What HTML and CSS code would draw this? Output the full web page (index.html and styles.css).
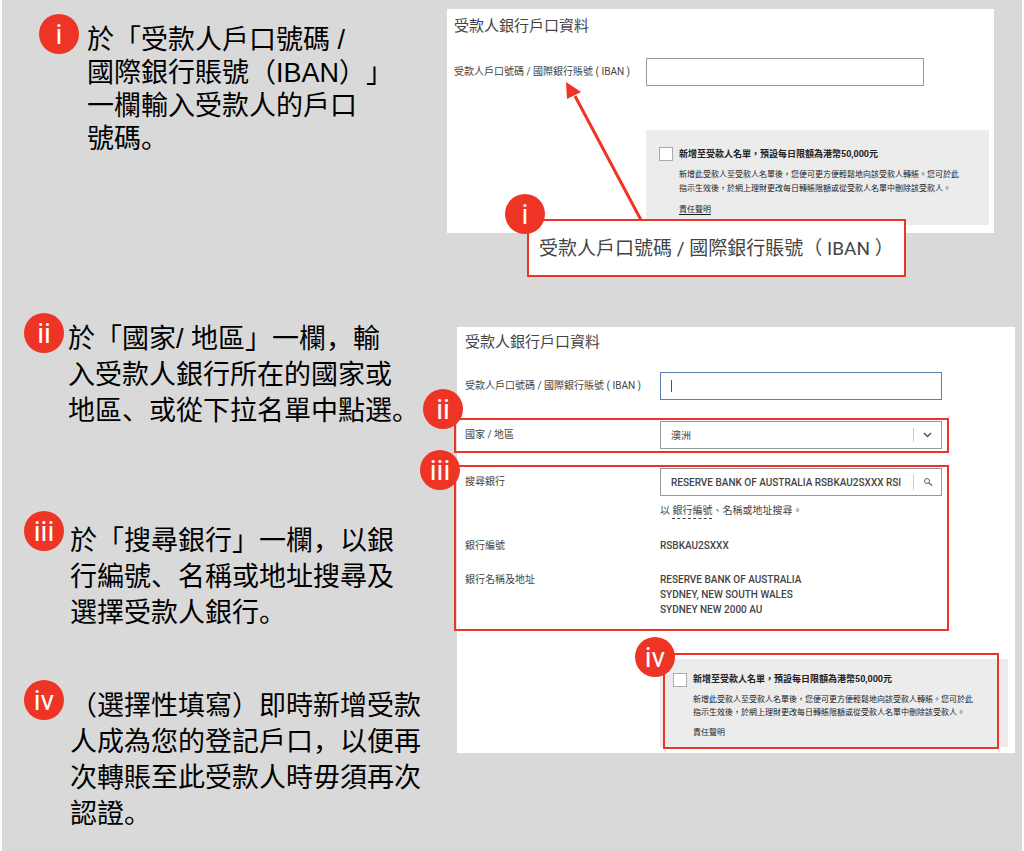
FILE: index.html
```html
<!DOCTYPE html>
<html lang="zh">
<head>
  <meta charset="UTF-8" />
  <meta name="viewport" content="width=device-width, initial-scale=1" />
  <title>受款人銀行戶口資料</title>
  <link rel="stylesheet" href="styles.css">
</head>
<body>
<main class="guide">

  <section class="part part-account">
    <div class="steps">
      <div class="step">
        <span class="badge">i</span>
        <p>於「受款人戶口號碼 /<br>國際銀行賬號（IBAN）」<br>一欄輸入受款人的戶口<br>號碼。</p>
      </div>
    </div>

    <form class="panel" lang="zh-Hant">
      <h2>受款人銀行戶口資料</h2>
      <div class="row">
        <label for="iban-1">受款人戶口號碼 / 國際銀行賬號 ( IBAN )</label>
        <input class="field" id="iban-1" type="text">
      </div>
      <div class="note">
        <input type="checkbox" id="save-1">
        <div class="note-text">
          <label for="save-1">新增至受款人名單，預設每日限額為港幣50,000元</label>
          <p>新增此受款人至受款人名單後，您便可更方便輕鬆地向該受款人轉賬。您可於此<br>指示生效後，於網上理財更改每日轉賬限額或從受款人名單中刪除該受款人。</p>
          <a class="underlined" href="#">責任聲明</a>
        </div>
      </div>

      <svg class="arrow" width="90" height="144" viewBox="0 0 90 144">
        <path d="M82 140 L16 16" stroke="#ee3424" stroke-width="3" fill="none"/>
        <path d="M7 2 L22 12 L8 19 Z" fill="#ee3424"/>
      </svg>
      <div class="callout">
        <span class="badge">i</span>
        受款人戶口號碼 / 國際銀行賬號（ IBAN ）
      </div>
    </form>
  </section>

  <section class="part part-bank">
    <div class="steps">
      <div class="step">
        <span class="badge">ii</span>
        <p>於「國家/ 地區」一欄，輸<br>入受款人銀行所在的國家或<br>地區、或從下拉名單中點選。</p>
      </div>
      <div class="step step-search">
        <span class="badge">iii</span>
        <p>於「搜尋銀行」一欄，以銀<br>行編號、名稱或地址搜尋及<br>選擇受款人銀行。</p>
      </div>
      <div class="step step-optional">
        <span class="badge">iv</span>
        <p>（選擇性填寫）即時新增受款<br>人成為您的登記戶口，以便再<br>次轉賬至此受款人時毋須再次<br>認證。</p>
      </div>
    </div>

    <form class="panel" lang="zh-Hant">
      <h2>受款人銀行戶口資料</h2>
      <div class="row">
        <label for="iban-2">受款人戶口號碼 / 國際銀行賬號 ( IBAN )</label>
        <div class="control">
          <input class="field focused" id="iban-2" type="text">
          <span class="caret"></span>
        </div>
      </div>

      <div class="marked marked-country">
        <span class="badge">ii</span>
        <div class="row">
          <label for="country">國家 / 地區</label>
          <div class="control">
            <select class="field" id="country"><option>澳洲</option></select>
            <svg class="chevron" width="28" height="16" viewBox="0 0 28 16">
              <path d="M.5 1V15" stroke="#ccc"/>
              <path d="M11 6l3.500 3.500L18 6" fill="none" stroke="#555" stroke-width="1.500"/>
            </svg>
          </div>
        </div>
      </div>

      <div class="marked marked-search">
        <span class="badge">iii</span>
        <div class="row">
          <label for="bank">搜尋銀行</label>
          <div>
            <div class="search">
              <input id="bank" type="text" value="RESERVE BANK OF AUSTRALIA RSBKAU2SXXX RSI">
              <button type="button" aria-label="搜尋">
                <svg width="10" height="10" viewBox="0 0 10 10">
                  <circle cx="4" cy="4" r="2.500" fill="none" stroke="#666"/>
                  <path d="M6 6l3 2.500" stroke="#666" stroke-width="1.500"/>
                </svg>
              </button>
            </div>
            <p class="hint">以 <a href="#">銀行編號</a>、名稱或地址搜尋。</p>
          </div>
        </div>
        <div class="row detail">
          <span>銀行編號</span>
          <span class="value">RSBKAU2SXXX</span>
        </div>
        <div class="row detail">
          <span>銀行名稱及地址</span>
          <span class="value">RESERVE BANK OF AUSTRALIA<br>SYDNEY, NEW SOUTH WALES<br>SYDNEY NEW 2000 AU</span>
        </div>
      </div>

      <div class="note">
        <input type="checkbox" id="save-2">
        <div class="note-text">
          <label for="save-2">新增至受款人名單，預設每日限額為港幣50,000元</label>
          <p>新增此受款人至受款人名單後，您便可更方便輕鬆地向該受款人轉賬。您可於此<br>指示生效後，於網上理財更改每日轉賬限額或從受款人名單中刪除該受款人。</p>
          <a href="#">責任聲明</a>
        </div>
        <div class="outline"><span class="badge">iv</span></div>
      </div>
    </form>
  </section>

</main>
</body>
</html>
```
FILE: styles.css
```css
* { box-sizing: border-box; }
body {
  margin: 0;
  background: #fff;
  color: #000;
  font-family: "Liberation Sans", "Noto Sans CJK SC", sans-serif;
}
h2, p { margin: 0; }

.guide {
  margin: 0 2px;
  min-height: 100vh;
  background: #d9d9d9;
}
.part { display: grid; align-items: start; }
.part-account {
  grid-template-columns: 445fr 575fr;
  padding-top: 9px;
}
.part-bank {
  grid-template-columns: 455fr 565fr;
  margin-top: 80px;
}

/* numbered instructions */
.step {
  display: flex;
  gap: 4px;
  padding-left: 22px;
  font-size: 27px;
  line-height: 36px;
  white-space: nowrap;
  text-spacing-trim: space-all;
}
.step p { padding-top: 8px; }
.part-account .step {
  gap: 8px;
  padding: 5px 0 0 37px;
  line-height: 33px;
}
.part-account .step p { padding-top: 10px; }
.step-search { margin-top: 82px; gap: 6px; }
.step-search p { padding-top: 12px; }
.step-optional { margin-top: 49px; gap: 6px; }

.badge {
  flex: none;
  width: 40px;
  height: 40px;
  border-radius: 50%;
  background: #ee3424;
  color: #fff;
  font-family: Roboto, sans-serif;
  font-size: 28px;
  line-height: 42px;
  text-align: center;
}

/* form screens */
.panel {
  position: relative;
  background: #fff;
  color: #444;
  font-family: Roboto, "Noto Sans CJK TC", sans-serif;
  font-size: 10px;
  line-height: 15px;
}
.part-account .panel {
  margin-right: 28px;
  padding: 7px 70px 8px 7px;
}
.part-bank .panel {
  margin: 14px 7px 0 0;
  padding: 5px 73px 6px 8px;
}
.panel h2 {
  margin-bottom: 20px;
  font-size: 15px;
  font-weight: 400;
  line-height: 20px;
}
.part-account h2 { margin-bottom: 22px; }
.row {
  display: grid;
  grid-template-columns: 195px 1fr;
}
.part-account .row { grid-template-columns: 192px 1fr; }
.row > label { padding-top: 6px; white-space: nowrap; }

.field, .search {
  display: block;
  width: 100%;
  height: 28px;
  padding: 0 10px;
  border: 1px solid #999;
  border-radius: 0;
  background: #fff;
  color: #444;
  font: inherit;
  appearance: none;
}
.focused { border-color: #5b7fae; }
.control { position: relative; }
.caret {
  position: absolute;
  top: 8px;
  left: 11px;
  width: 1px;
  height: 12px;
  background: #555;
}
.chevron {
  position: absolute;
  top: 6px;
  right: 1px;
}
.search {
  display: flex;
  align-items: center;
  padding-right: 0;
}
.search input {
  flex: 1;
  min-width: 0;
  padding: 0;
  border: 0;
  color: inherit;
  font: inherit;
}
.search button {
  width: 28px;
  height: 16px;
  padding: 0;
  border: 0;
  border-left: 1px solid #ccc;
  background: none;
  line-height: 10px;
}
.search input, .value { font-weight: 500; }
.hint { margin-top: 7px; }
.hint a {
  display: inline-block;
  color: inherit;
  text-decoration: none;
  border-bottom: 1px dashed #444;
}
.detail { margin-top: 19px; }

/* red highlights */
.marked {
  position: relative;
  margin: 0 -7px 0 -11px;
  padding: 1px 5px 2px 9px;
  border: 2px solid #ee3424;
}
.marked-country { margin-top: 18px; }
.marked-search { margin-top: 12px; padding-bottom: 12px; }
.marked .badge, .callout .badge, .outline .badge { position: absolute; }
.marked-country .badge { top: -31px; left: -33px; }
.marked-search .badge { top: -17px; left: -36px; }

.note {
  position: relative;
  display: flex;
  gap: 6px;
  margin: 28px -66px 0 195px;
  padding: 14px 0 8px 13px;
  background: #ececec;
  color: #222;
  font-size: 8px;
  line-height: 13px;
  white-space: nowrap;
}
.part-account .note {
  margin: 44px -65px 0 192px;
  padding: 17px 0 8px 13px;
  line-height: 14px;
}
.note input {
  flex: none;
  width: 14px;
  height: 14px;
  margin: 0;
  border: 1px solid #aaa;
  background: #fff;
  appearance: none;
}
.note label {
  display: block;
  font-size: 9px;
  font-weight: 700;
}
.note p { margin: 7px 0; }
.note a { color: inherit; text-decoration: none; }
.note a.underlined { border-bottom: 1px solid #222; }
.outline {
  position: absolute;
  inset: -6px 9px -2px 3px;
  border: 2px solid #ee3424;
  pointer-events: none;
}
.outline .badge { top: -18px; left: -30px; }

.arrow {
  position: absolute;
  top: 71px;
  left: 112px;
}
.callout {
  position: absolute;
  top: 210px;
  left: 80px;
  padding: 2px 10px 0;
  border: 2px solid #ee3424;
  background: #fff;
  font-size: 19px;
  line-height: 52px;
  white-space: nowrap;
}
.callout .badge { top: -27px; left: -24px; }
```
